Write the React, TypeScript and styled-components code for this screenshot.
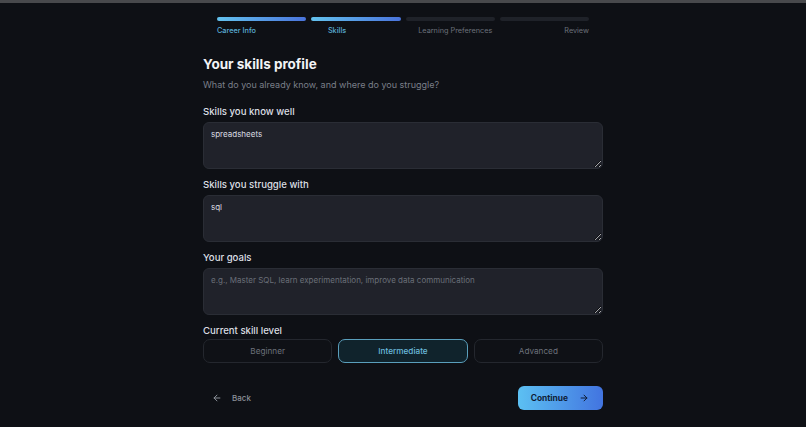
import styled, { createGlobalStyle } from "styled-components";
import { useState } from "react";

const GlobalStyle = createGlobalStyle`
  html, body {
    margin: 0;
    background: #0e1015;
  }
  body {
    font-family: Inter, "Noto Sans", sans-serif;
    color: #e8eaee;
    -webkit-font-smoothing: antialiased;
  }
`;

const steps = [
  { label: "Career Info", done: true },
  { label: "Skills", done: true },
  { label: "Learning Preferences", done: false },
  { label: "Review", done: false },
];

const levels = ["Beginner", "Intermediate", "Advanced"];

function App() {
  const [level, setLevel] = useState("Intermediate");
  const [known, setKnown] = useState("spreadsheets");
  const [struggle, setStruggle] = useState("sql");
  const [goals, setGoals] = useState("");

  return (
    <>
      <GlobalStyle />
      <TopStrip />
      <Page>
        <Stepper>
          <Bars>
            {steps.map((s) => (
              <Bar key={s.label} $active={s.done} />
            ))}
          </Bars>
          <StepLabels>
            {steps.map((s) => (
              <StepLabel key={s.label} $active={s.done}>
                {s.label}
              </StepLabel>
            ))}
          </StepLabels>
        </Stepper>

        <Title>Your skills profile</Title>
        <Subtitle>What do you already know, and where do you struggle?</Subtitle>

        <Field>
          <Label>Skills you know well</Label>
          <TextArea value={known} onChange={(e) => setKnown(e.target.value)} />
        </Field>
        <Field>
          <Label>Skills you struggle with</Label>
          <TextArea value={struggle} onChange={(e) => setStruggle(e.target.value)} />
        </Field>
        <Field>
          <Label>Your goals</Label>
          <TextArea
            value={goals}
            placeholder="e.g., Master SQL, learn experimentation, improve data communication"
            onChange={(e) => setGoals(e.target.value)}
          />
        </Field>

        <Label>Current skill level</Label>
        <LevelRow>
          {levels.map((l) => (
            <LevelButton key={l} $selected={level === l} onClick={() => setLevel(l)}>
              {l}
            </LevelButton>
          ))}
        </LevelRow>

        <Footer>
          <BackButton>
            <ArrowIcon dir="left" />
            Back
          </BackButton>
          <ContinueButton>
            Continue
            <ArrowIcon dir="right" />
          </ContinueButton>
        </Footer>
      </Page>
    </>
  );
}

function ArrowIcon({ dir }: { dir: "left" | "right" }) {
  return (
    <svg width="10" height="10" viewBox="0 0 24 24" fill="none" stroke="currentColor" strokeWidth="2.4" strokeLinecap="round" strokeLinejoin="round">
      {dir === "left" ? (
        <path d="M19 12H5M12 19l-7-7 7-7" />
      ) : (
        <path d="M5 12h14M12 5l7 7-7 7" />
      )}
    </svg>
  );
}

const TopStrip = styled.div`
  height: 3px;
  background: #48494c;
`;

const Page = styled.div`
  width: 400px;
  margin: 0 auto;
  display: flex;
  flex-direction: column;
`;

const Stepper = styled.div`
  width: 372px;
  margin: 14px auto 0;
  display: flex;
  flex-direction: column;
  gap: 3px;
`;

const Bars = styled.div`
  display: flex;
  gap: 5px;
`;

const Bar = styled.div<{ $active: boolean }>`
  flex: 1;
  height: 4px;
  border-radius: 2px;
  background: ${(p) =>
    p.$active ? "linear-gradient(90deg, #63c2ee, #4a74dc)" : "#1f2229"};
`;

const StepLabels = styled.div`
  display: flex;
  justify-content: space-between;
`;

const StepLabel = styled.span<{ $active: boolean }>`
  font-size: 7.3px;
  line-height: 14px;
  font-weight: ${(p) => (p.$active ? 500 : 400)};
  color: ${(p) => (p.$active ? "#5aaed6" : "#6c717b")};
`;

const Title = styled.h1`
  margin: 14px 0 0;
  font-size: 13.5px;
  line-height: 24px;
  font-weight: 700;
  color: #f2f3f5;
`;

const Subtitle = styled.p`
  margin: 1px 0 12px;
  font-size: 9px;
  line-height: 16px;
  color: #7a7f89;
`;

const Field = styled.div`
  display: flex;
  flex-direction: column;
  margin-bottom: 9px;
`;

const Label = styled.label`
  font-size: 9.6px;
  line-height: 14px;
  font-weight: 500;
  color: #dcdfe4;
  margin-bottom: 3px;
`;

const TextArea = styled.textarea`
  box-sizing: border-box;
  width: 100%;
  height: 47px;
  padding: 4px 7px;
  border: 1px solid #2a2d35;
  border-radius: 6px;
  background: #20222a;
  color: #dadce1;
  font-family: Inter, "Noto Sans", sans-serif;
  font-size: 8px;
  line-height: 14px;
  resize: vertical;
  outline: none;

  &::placeholder {
    color: #6a6f78;
  }
`;

const LevelRow = styled.div`
  display: grid;
  grid-template-columns: repeat(3, 1fr);
  gap: 6px;
  margin-top: -2px;
`;

const LevelButton = styled.button<{ $selected: boolean }>`
  height: 24px;
  border-radius: 7px;
  font-family: Inter, "Noto Sans", sans-serif;
  font-size: 8.2px;
  cursor: pointer;
  border: 1px solid ${(p) => (p.$selected ? "#5a9fbc" : "#24272e")};
  background: ${(p) => (p.$selected ? "#10232c" : "#0f1116")};
  color: ${(p) => (p.$selected ? "#6cbbdc" : "#6d727b")};
  font-weight: ${(p) => (p.$selected ? 500 : 400)};
`;

const Footer = styled.div`
  display: flex;
  justify-content: space-between;
  align-items: center;
  margin-top: 23px;
`;

const BackButton = styled.button`
  display: flex;
  align-items: center;
  gap: 10px;
  height: 24px;
  padding: 0 9px;
  border: none;
  background: none;
  color: #8b9099;
  font-family: Inter, "Noto Sans", sans-serif;
  font-size: 8px;
  font-weight: 500;
  cursor: pointer;
`;

const ContinueButton = styled.button`
  display: flex;
  align-items: center;
  gap: 11px;
  height: 24px;
  padding: 0 14px 0 13px;
  border: none;
  border-radius: 6px;
  background: linear-gradient(90deg, #5cc0f2, #4274e0);
  color: #0f1d36;
  font-family: Inter, "Noto Sans", sans-serif;
  font-size: 8.4px;
  font-weight: 700;
  cursor: pointer;
`;

export default App;
